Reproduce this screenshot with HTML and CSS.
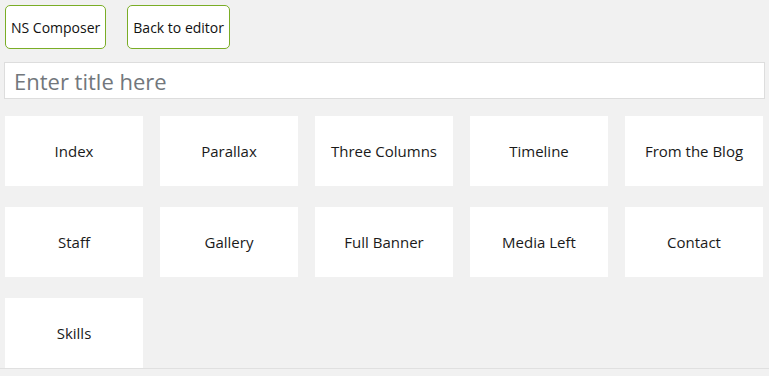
FILE: index.html
```html
<!DOCTYPE html>
<html lang="en">
<head>
    <meta charset="UTF-8">
    <title>NS Composer</title>
    <link rel="stylesheet" href="styles.css">
</head>
<body>
<div class="toolbar">
    <button class="btn">NS Composer</button>
    <button class="btn">Back to editor</button>
</div>
<div class="titlewrap">
    <input type="text" class="title" placeholder="Enter title here">
</div>
<div class="layouts">
    <div class="grid">
        <div class="tile">Index</div>
        <div class="tile">Parallax</div>
        <div class="tile">Three Columns</div>
        <div class="tile">Timeline</div>
        <div class="tile">From the Blog</div>
        <div class="tile">Staff</div>
        <div class="tile">Gallery</div>
        <div class="tile">Full Banner</div>
        <div class="tile">Media Left</div>
        <div class="tile">Contact</div>
        <div class="tile">Skills</div>
    </div>
</div>
</body>
</html>
```

FILE: styles.css
```css
body { background: #f1f1f1; font-family: 'Open Sans', Arial, sans-serif; margin: 0; color: #222; }
.toolbar { display: flex; gap: 21px; padding: 5px 5px 0; }
.btn { height: 44px; box-sizing: border-box; padding: 0 5px; background: #fff; border: 1px solid #7aad26; border-radius: 5px; font-family: 'Open Sans', Arial, sans-serif; font-size: 14px; color: #111; cursor: pointer; }
.titlewrap { padding: 13px 4px 0; }
.title { display: block; width: 100%; height: 37px; box-sizing: border-box; border: 1px solid #ddd; background: #fff; padding: 0 9px; font-family: 'Open Sans', Arial, sans-serif; font-size: 22px; outline: none; }
.title::placeholder { color: #72777c; }
.layouts { padding: 17px 6px 0 5px; border-bottom: 1px solid #e0e0e0; }
.grid { display: grid; grid-template-columns: repeat(5, 1fr); column-gap: 17px; row-gap: 21px; }
.tile { height: 70px; background: #fff; display: flex; align-items: center; justify-content: center; font-size: 15px; color: #1a1a1a; }
```
